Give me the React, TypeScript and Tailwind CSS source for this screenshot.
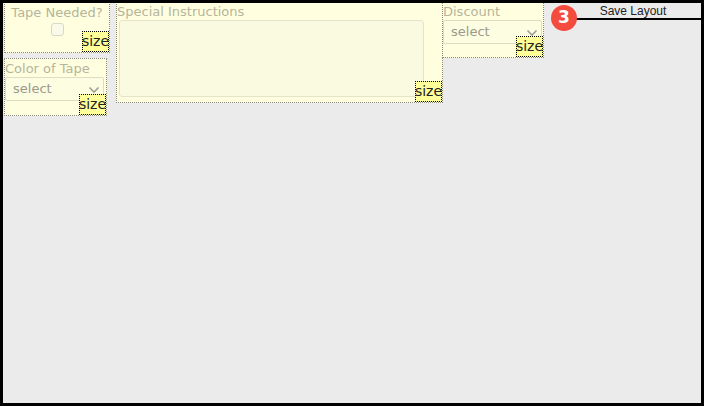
import React from "react";

const font = { fontFamily: '"DejaVu Sans", Verdana, sans-serif' };

function SizeTag() {
  return (
    <div className="absolute right-0 bottom-0 w-[27px] h-[21px] bg-[#ffff99] border border-dotted border-black text-[14px] leading-[19px] text-[#222] flex items-center justify-center">
      size
    </div>
  );
}

function FakeSelect({ className }: { className: string }) {
  return (
    <div
      className={`flex items-center justify-between border border-[#deddc4] bg-[#fdfde2] rounded-[2px] pl-[7px] pr-[3px] text-[13px] text-[#9a9a8c] ${className}`}
    >
      <span>select</span>
      <svg width="12" height="8" viewBox="0 0 12 8" className="mt-[1px]">
        <path d="M1.5 1.5 L6 6 L10.5 1.5" fill="none" stroke="#a09f94" strokeWidth="1.6" />
      </svg>
    </div>
  );
}

// form designer canvas: each field box sits where the user dropped it
export default function App() {
  return (
    <div
      className="relative w-[704px] h-[406px] border-[3px] border-black bg-[#ebebeb] overflow-hidden"
      style={font}
    >
      {/* Tape Needed? */}
      <div className="absolute left-[1px] top-[-3px] w-[106px] h-[53px] bg-[#ffffe0] border border-dotted border-[#8a8a80] z-10 flex flex-col items-center">
        <div className="text-[13px] leading-[16px] mt-[4px] text-[#b5b59c]">Tape Needed?</div>
        <div className="mt-[2px] w-[13px] h-[13px] rounded-[3px] border border-[#d8d8c8] bg-[#fafae8]" />
        <SizeTag />
      </div>

      {/* Color of Tape */}
      <div className="absolute left-[1px] top-[55px] w-[103px] h-[58px] bg-[#ffffe0] border border-dotted border-[#8a8a80] flex flex-col">
        <div className="text-[13px] leading-[16px] mt-[2px] text-[#b5b59c]">Color of Tape</div>
        <FakeSelect className="w-[99px] h-[24px]" />
        <SizeTag />
      </div>

      {/* Special Instructions */}
      <div className="absolute left-[113px] top-[-3px] w-[327px] h-[103px] bg-[#ffffe0] border border-dotted border-[#8a8a80] flex flex-col">
        <div className="text-[13px] leading-[16px] mt-[3px] text-[#b5b59c]">Special Instructions</div>
        <div className="ml-[2px] w-[305px] h-[77px] rounded-[3px] border border-[#e4e4cc] bg-[#fafae0]" />
        <SizeTag />
      </div>

      {/* Discount */}
      <div className="absolute left-[439px] top-[-3px] w-[102px] h-[58px] bg-[#ffffe0] border border-dotted border-[#8a8a80] flex flex-col">
        <div className="text-[13px] leading-[16px] mt-[3px] text-[#b5b59c]">Discount</div>
        <FakeSelect className="w-[99px] h-[24px]" />
        <SizeTag />
      </div>

      {/* top edge of the frame over the canvas */}
      <div className="absolute left-0 right-0 top-[-3px] h-[3px] bg-black z-[5]" />

      {/* Save Layout */}
      <div
        className="absolute left-[562px] top-[-3px] w-[136px] h-[20px] border-b-2 border-black bg-[#ebebeb] text-[12px] leading-[22px] text-center text-[#222]"
        style={{ fontFamily: '"Liberation Sans", Arial, sans-serif' }}
      >
        Save Layout
      </div>

      {/* badge */}
      <div className="absolute left-[548px] top-[2px] w-[26px] h-[26px] rounded-full bg-[#f44b3f] text-white font-bold text-[17px] flex items-center justify-center z-20">
        3
      </div>
    </div>
  );
}
